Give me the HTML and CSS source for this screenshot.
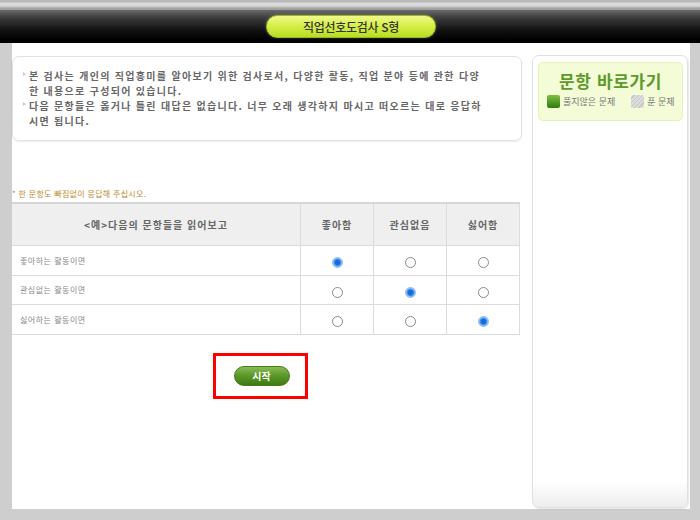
FILE: index.html
```html
<!DOCTYPE html>
<html lang="ko">
<head>
<meta charset="utf-8">
<link rel="stylesheet" href="styles.css">
</head>
<body>
<div class="topstrip"></div>
<header class="bar">
  <div class="pill">직업선호도검사 S형</div>
</header>
<main class="main">
  <section class="left">
    <div class="info">
      <ul>
        <li>본 검사는 개인의 직업흥미를 알아보기 위한 검사로서, 다양한 활동, 직업 분야 등에 관한 다양<br>한 내용으로 구성되어 있습니다.</li>
        <li>다음 문항들은 옳거나 틀린 대답은 없습니다. 너무 오래 생각하지 마시고 떠오르는 대로 응답하<br>시면 됩니다.</li>
      </ul>
    </div>
    <p class="note">* 한 문항도 빠짐없이 응답해 주십시오.</p>
    <table class="tbl">
      <thead>
        <tr><th class="q">&lt;예&gt;다음의 문항들을 읽어보고</th><th>좋아함</th><th>관심없음</th><th>싫어함</th></tr>
      </thead>
      <tbody>
        <tr><td class="q">좋아하는 활동이면</td><td><span class="radio on"></span></td><td><span class="radio"></span></td><td><span class="radio"></span></td></tr>
        <tr><td class="q">관심없는 활동이면</td><td><span class="radio"></span></td><td><span class="radio on"></span></td><td><span class="radio"></span></td></tr>
        <tr><td class="q">싫어하는 활동이면</td><td><span class="radio"></span></td><td><span class="radio"></span></td><td><span class="radio on"></span></td></tr>
      </tbody>
    </table>
    <div class="startwrap">
      <button class="start">시작</button>
    </div>
  </section>
  <aside class="side">
    <div class="goto">
      <div class="goto-title">문항 바로가기</div>
      <div class="legend">
        <span class="sq green"></span><span class="lg">풀지않은 문제</span>
        <span class="sq done"></span><span class="lg">푼 문제</span>
      </div>
    </div>
  </aside>
</main>
</body>
</html>
```
FILE: styles.css
```css
html, body {
  margin: 0;
  padding: 0;
}
body {
  width: 700px;
  height: 520px;
  overflow: hidden;
  background: #cecece;
  font-family: "Noto Sans CJK KR", "Noto Sans", sans-serif;
}
.topstrip {
  height: 10px;
  background: linear-gradient(#b9b9b9 0, #b9b9b9 2px, #dcdcdc 3px, #d6d6d6 6px, #a9a9a9 8px, #9a9a9a 10px);
}
.bar {
  height: 33px;
  background: linear-gradient(#6a6a6a 0, #3a3a3a 8px, #121212 20px, #000 30px, #000 33px);
  display: flex;
  justify-content: center;
  align-items: center;
}
.pill {
  width: 168px;
  height: 21px;
  margin-left: 2px;
  border-radius: 11px;
  background: linear-gradient(#eefa8a 0%, #d8ef4a 45%, #b9dc22 100%);
  border: 1px solid #97b820;
  box-shadow: 0 0 3px rgba(255,255,255,0.25);
  font-size: 12px;
  font-weight: 500;
  color: #333;
  text-align: center;
  line-height: 21px;
  letter-spacing: -0.3px;
}
.main {
  margin: 0 10px 0 12px;
  height: 466px;
  background: #fff;
  display: flex;
  gap: 10px;
}
.left {
  width: 510px;
  padding-top: 13px;
}
.info {
  height: 85px;
  border: 1px solid #e2e2e2;
  border-radius: 7px;
  box-shadow: 0 1px 2px rgba(0,0,0,0.08);
  box-sizing: border-box;
  padding: 11px 0 0 10px;
}
.info ul {
  margin: 0;
  padding: 0;
  list-style: none;
}
.info li {
  position: relative;
  padding-left: 6px;
  font-size: 10px;
  line-height: 15px;
  font-weight: 700;
  color: #666;
  letter-spacing: 1.3px;
}
.info li::before {
  content: "";
  position: absolute;
  left: 0;
  top: 4px;
  border-left: 3px solid #ccc;
  border-top: 2.5px solid transparent;
  border-bottom: 2.5px solid transparent;
}
.note {
  margin: 48px 0 0 0;
  font-size: 8px;
  line-height: 10px;
  color: #c08a2a;
  letter-spacing: 0.3px;
}
.tbl {
  margin-top: 3px;
  width: 508px;
  border-collapse: collapse;
  border-top: 2px solid #d6d6d6;
}
.tbl th, .tbl td {
  border: 1px solid #dcdcdc;
  text-align: center;
  padding: 0;
}
.tbl tr > :first-child { border-left: none; }
.tbl th {
  height: 41px;
  background: #efefef;
  font-size: 10px;
  font-weight: 700;
  color: #666;
  letter-spacing: 1px;
  width: 72px;
}
.tbl th.q { width: auto; }
.tbl td {
  height: 28.5px;
}
.tbl td.q {
  text-align: left;
  padding-left: 8px;
  font-size: 8px;
  color: #888;
  letter-spacing: 0.5px;
}
.radio {
  display: inline-block;
  vertical-align: middle;
  width: 9px;
  height: 9px;
  border: 1px solid #8a8a8a;
  border-radius: 50%;
  background: #fff;
}
.radio.on {
  border-color: #8fc0f8;
  background: radial-gradient(circle, #1967d2 0, #1a6fe0 2.5px, #5aa0f5 3.5px, #bcd8fb 5px);
}
.startwrap {
  margin: 18px 0 0 201px;
  width: 89px;
  height: 40px;
  border: 3px solid #ff0000;
  display: flex;
  justify-content: center;
  align-items: center;
}
.start {
  width: 56px;
  height: 20px;
  margin-left: 2px;
  border: 1px solid #4a7a18;
  border-radius: 10px;
  background: linear-gradient(#88bb55 0%, #5c9a2a 45%, #3f7a12 100%);
  color: #fff;
  font-family: "Noto Sans CJK KR", sans-serif;
  font-size: 10px;
  font-weight: 700;
  padding: 0;
  line-height: 18px;
}
.side {
  width: 156px;
  margin-top: 12px;
  height: 453px;
  border: 1px solid #e0e0e0;
  border-radius: 7px;
  box-sizing: border-box;
  background: linear-gradient(#fff 0, #fff 425px, #ececec 453px);
  box-shadow: 1px 1px 2px rgba(0,0,0,0.1);
  padding: 6px 4px 0 5px;
}
.goto {
  height: 59px;
  background: #f3fcd6;
  border: 1px solid #e2f2b8;
  border-radius: 5px;
  box-sizing: border-box;
  padding-top: 6px;
}
.goto-title {
  text-align: center;
  font-size: 17px;
  font-weight: 700;
  color: #5d9a2c;
  line-height: 24px;
  letter-spacing: 0.6px;
}
.legend {
  display: flex;
  align-items: center;
  padding-left: 8px;
  margin-top: 2px;
}
.sq {
  width: 13px;
  height: 13px;
  border-radius: 2px;
  display: inline-block;
}
.sq.green {
  background: linear-gradient(#7cc040, #2f7a12);
}
.sq.done {
  background: repeating-linear-gradient(135deg, #dcdcdc 0, #dcdcdc 2px, #c4c4c4 2px, #c4c4c4 3px);
  margin-left: 16px;
}
.lg {
  font-size: 9px;
  color: #777;
  margin-left: 3px;
}
```
